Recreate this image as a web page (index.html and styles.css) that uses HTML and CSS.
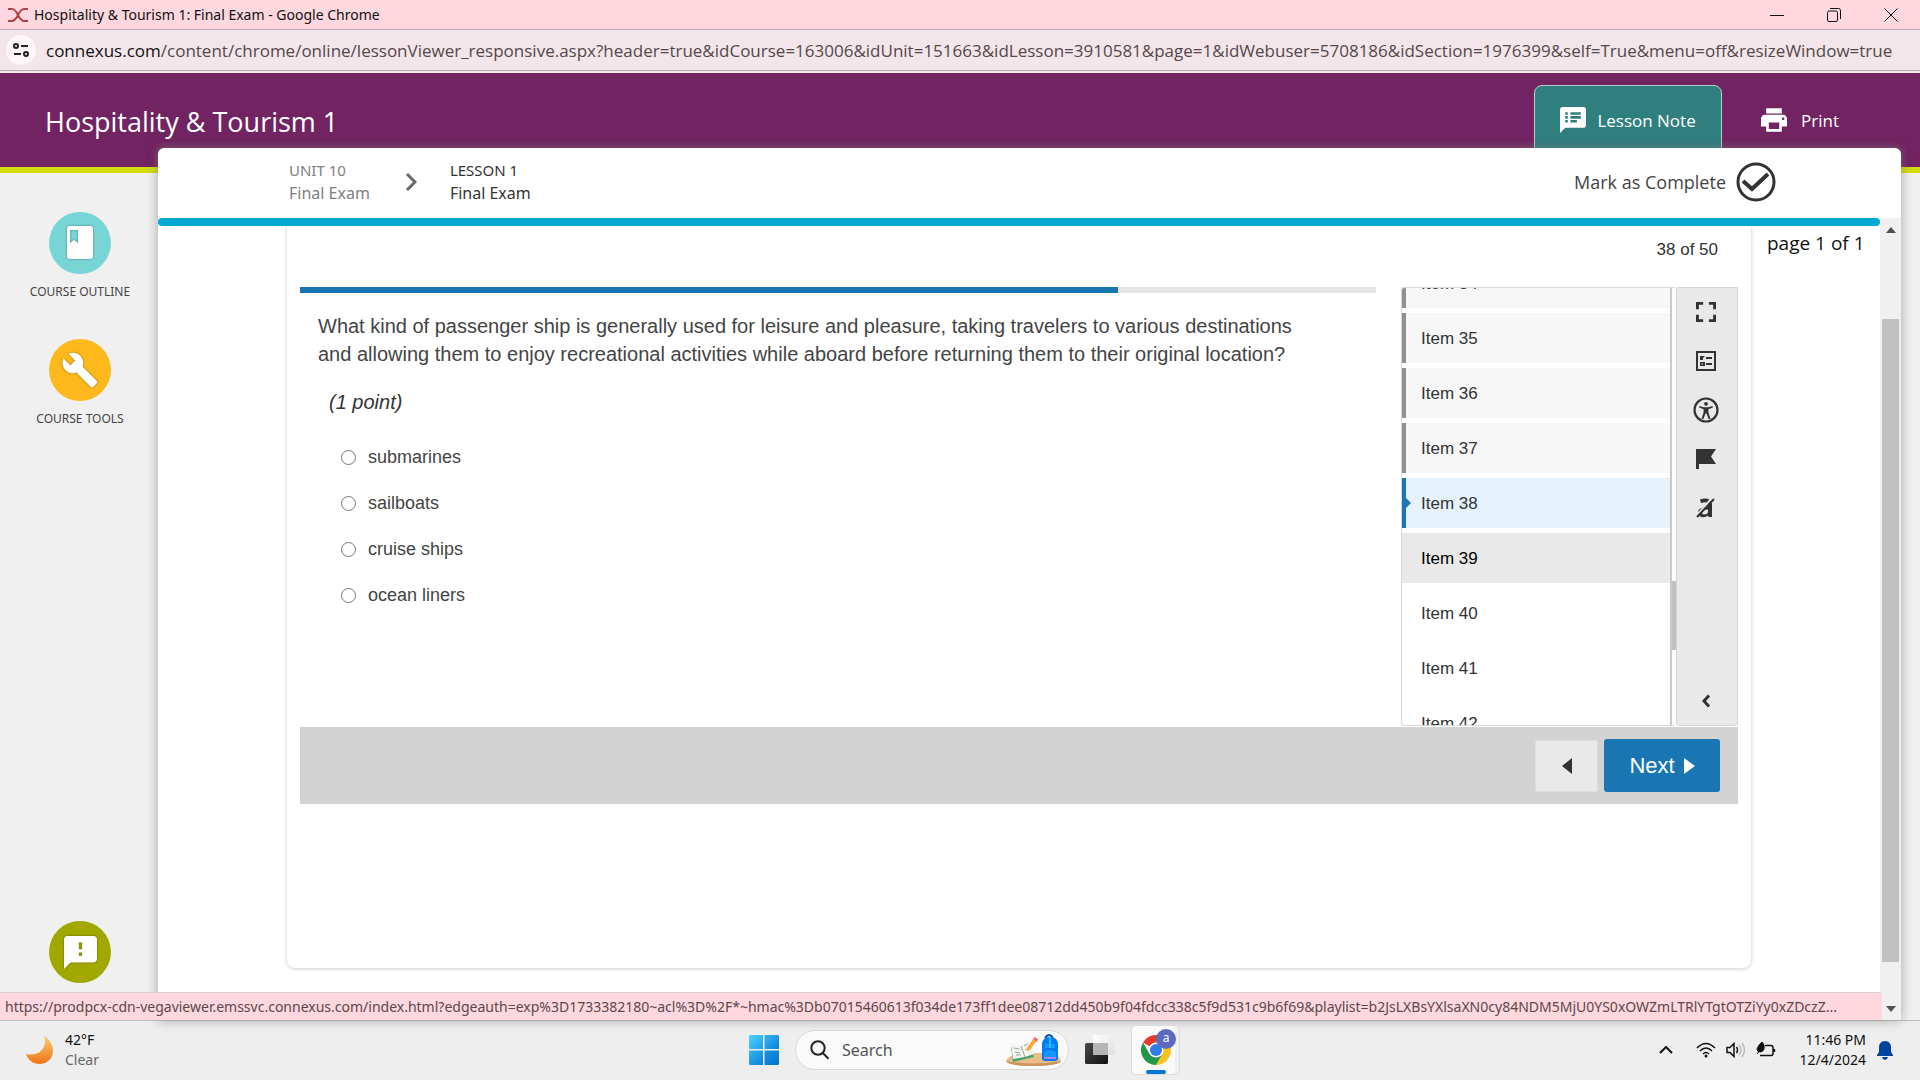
FILE: index.html
```html
<!DOCTYPE html>
<html lang="en">
<head>
<meta charset="utf-8">
<title>Hospitality &amp; Tourism 1: Final Exam</title>
<link rel="stylesheet" href="styles.css">
</head>
<body>
<div class="titlebar">
  <svg class="brand" viewBox="0 0 20 14" aria-hidden="true"><path d="M0 1h4q3 0 6 6t6 6h4M0 13h4q3 0 6-6t6-6h4" fill="none" stroke="#b0444c" stroke-width="2"/></svg>
  <span class="window-title">Hospitality &amp; Tourism 1: Final Exam - Google Chrome</span>
  <div class="window-buttons">
    <button aria-label="Minimize"><svg viewBox="0 0 14 14"><path d="M0 7.500h14"/></svg></button>
    <button aria-label="Restore"><svg viewBox="0 0 14 14"><rect x=".5" y="3" width="10" height="10.500" rx="1.500"/><path d="M3 .5h8.500q2 0 2 2V11"/></svg></button>
    <button aria-label="Close"><svg viewBox="0 0 14 14"><path d="M.5.5l13 13M13.500.5l-13 13"/></svg></button>
  </div>
</div>
<div class="addressbar">
  <button class="site-info" aria-label="Site information"><svg viewBox="0 0 16 14"><circle cx="3" cy="3" r="2"/><path d="M8 3h7M1 11h7"/><circle cx="13" cy="11" r="2"/></svg></button>
  <span class="url"><span class="host">connexus.com</span>/content/chrome/online/lessonViewer_responsive.aspx?header=true&amp;idCourse=163006&amp;idUnit=151663&amp;idLesson=3910581&amp;page=1&amp;idWebuser=5708186&amp;idSection=1976399&amp;self=True&amp;menu=off&amp;resizeWindow=true</span>
</div>
<div class="app">
  <header class="course-header">
    <h1>Hospitality &amp; Tourism 1</h1>
    <button class="lesson-note"><svg viewBox="2 2 20 20"><path d="M20 2H4c-1.100 0-1.990.9-1.990 2L2 22l4-4h14c1.100 0 2-.9 2-2V4c0-1.100-.9-2-2-2zM8 14H6v-2h2v2zm0-3H6V9h2v2zm0-3H6V6h2v2zm7 6h-5v-2h5v2zm3-3h-8V9h8v2zm0-3h-8V6h8v2z"/></svg>Lesson Note</button>
    <button class="print"><svg viewBox="2 2 20 20"><path d="M19 8H5c-1.660 0-3 1.340-3 3v6h4v4h12v-4h4v-6c0-1.660-1.340-3-3-3zm-3 11H8v-5h8v5zm3-7c-.55 0-1-.45-1-1s.45-1 1-1 1 .45 1 1-.45 1-1 1zm-1-9H6v4h12V3z"/></svg>Print</button>
  </header>
  <div class="workspace">
    <nav class="sidebar">
      <a class="side-link" href="#outline"><span class="disc teal"><svg viewBox="0 0 28 34"><path fill-rule="evenodd" d="M4 0h20q3 0 3 3v27q0 3-3 3H4q-3 0-3-3V3q0-3 3-3zM4 4v13l4-3 4 3V4z"/></svg></span>COURSE OUTLINE</a>
      <a class="side-link" href="#tools"><span class="disc amber"><svg class="wrench" viewBox="0 0 24 24"><path d="M22.700 19l-9.100-9.100c.9-2.300.4-5-1.500-6.900-2-2-5-2.400-7.400-1.300L9 6 6 9 1.600 4.700C.4 7.100.9 10.100 2.900 12.100c1.900 1.900 4.600 2.400 6.900 1.500l9.100 9.100c.4.4 1 .4 1.400 0l2.300-2.300c.5-.4.5-1.100.1-1.400z"/></svg></span>COURSE TOOLS</a>
      <a class="side-link feedback" href="#feedback" aria-label="Feedback"><span class="disc olive"><svg class="bubble" viewBox="2 2 20 20"><path d="M20 2H4c-1.100 0-1.990.9-1.990 2L2 22l4-4h14c1.100 0 2-.9 2-2V4c0-1.100-.9-2-2-2zm-7 12h-2v-2h2v2zm0-4h-2V6h2v4z"/></svg></span></a>
    </nav>
    <main class="lesson">
      <div class="lesson-bar">
        <div class="crumb unit"><small>UNIT 10</small><span>Final Exam</span></div>
        <svg class="crumb-arrow" viewBox="0 0 12 20" aria-hidden="true"><path d="M2 2l8 8-8 8"/></svg>
        <div class="crumb"><small>LESSON 1</small><span>Final Exam</span></div>
        <button class="complete">Mark as Complete<svg viewBox="0 0 40 40"><circle cx="20" cy="20" r="18"/><path class="tick" d="M7 19l9 8 16-15"/></svg></button>
      </div>
      <div class="lesson-body">
        <div class="scroll-area">
          <div class="accent"></div>
          <div class="page-row">
            <section class="exam">
              <p class="count">38 of 50</p>
              <div class="exam-row">
                <div class="question">
                  <div class="progress"><div class="progress-fill" style="width:76%"></div></div>
                  <p class="prompt">What kind of passenger ship is generally used for leisure and pleasure, taking travelers to various destinations<br>and allowing them to enjoy recreational activities while aboard before returning them to their original location?</p>
                  <p class="points">(1 point)</p>
                  <div class="answers">
                    <label><input type="radio" name="answer">submarines</label>
                    <label><input type="radio" name="answer">sailboats</label>
                    <label><input type="radio" name="answer">cruise ships</label>
                    <label><input type="radio" name="answer">ocean liners</label>
                  </div>
                </div>
                <div class="items">
                  <div class="item-list">
                    <button class="item done">Item 34</button>
                    <button class="item done">Item 35</button>
                    <button class="item done">Item 36</button>
                    <button class="item done">Item 37</button>
                    <button class="item current">Item 38</button>
                    <button class="item hover">Item 39</button>
                    <button class="item">Item 40</button>
                    <button class="item">Item 41</button>
                    <button class="item">Item 42</button>
                  </div>
                  <div class="item-track"><div class="item-thumb"></div></div>
                </div>
                <div class="tools">
                  <button aria-label="Full screen"><svg viewBox="5 5 14 14"><path d="M7 14H5v5h5v-2H7v-3zm-2-4h2V7h3V5H5v5zm12 7h-3v2h5v-5h-2v3zM14 5v2h3v3h2V5h-5z"/></svg></button>
                  <button aria-label="Item review"><svg viewBox="0 0 20 20"><path fill-rule="evenodd" d="M0 0h20v20H0zM2 2v16h16V2zM4 5h5L7 7v2H4zM10 6h6v2h-6zM4 11h5v4H4zm1.500 1.500v1h1.500v-1zM10 12h6v2h-6z"/></svg></button>
                  <button aria-label="Accessibility"><svg class="large" viewBox="0 0 26 26"><circle cx="13" cy="13" r="11.500" fill="none" stroke="#333" stroke-width="2.200"/><circle cx="13" cy="6.800" r="1.900"/><path d="M6.500 9l4 1.200h5l4-1.200.4 1.500-4.500 1.700v3l2 6.500-1.700.5-2.200-5.700h-1l-2.200 5.700-1.700-.5 2-6.500v-3l-4.500-1.700z"/></svg></button>
                  <button aria-label="Flag item"><svg viewBox="0 0 20 20"><path d="M0 0h20l-5 7.500 5 7.500H3v5H0z"/></svg></button>
                  <button aria-label="Answer masking"><svg viewBox="0 0 20 20"><path fill-rule="evenodd" d="M4 1.500Q10-.5 14 2q2 1.500 2 4v13h-3.500l-.5-1.500Q9 20 5.500 19 2 18 2 14.500 2 9 12 9V6.500Q12 3 5 5zM12 11.500q-6 0-6 3 0 2 2 2 4 0 4-3z"/><path d="M0 18L16 0" stroke="#e9e9e9" stroke-width="2"/><path d="M1 19L18 1" stroke="#333" stroke-width="2"/></svg></button>
                  <button class="collapse" aria-label="Collapse panel"><svg class="small" viewBox="0 0 10 14"><path d="M8 1.500L3 7l5 5.500" fill="none" stroke="#333" stroke-width="3"/></svg></button>
                </div>
              </div>
              <footer class="exam-nav">
                <button class="prev" aria-label="Previous"><svg viewBox="0 0 10 16"><path d="M10 0v16L0 8z"/></svg></button>
                <button class="next">Next<svg viewBox="0 0 11 16"><path d="M0 0v16l11-8z"/></svg></button>
              </footer>
            </section>
            <p class="page-label">page 1 of 1</p>
          </div>
        </div>
        <div class="scrollbar">
          <svg viewBox="0 0 10 6"><path d="M0 6h10L5 0z"/></svg>
          <div class="thumb"></div>
          <svg viewBox="0 0 10 6"><path d="M0 0h10L5 6z"/></svg>
        </div>
      </div>
    </main>
  </div>
  <div class="status">https://prodpcx-cdn-vegaviewer.emssvc.connexus.com/index.html?edgeauth=exp%3D1733382180~acl%3D%2F*~hmac%3Db07015460613f034de173ff1dee08712dd450b9f04fdcc338c5f9d531c9b6f69&amp;playlist=b2JsLXBsYXlsaXN0cy84NDM5MjU0YS0xOWZmLTRlYTgtOTZiYy0xZDczZ...</div>
</div>
<div class="taskbar">
  <div class="weather">
    <svg viewBox="0 0 28 28"><defs><linearGradient id="moon" x2="0" y2="1"><stop offset="0" stop-color="#f9cf70"/><stop offset="1" stop-color="#ef7418"/></linearGradient></defs><path d="M18 0C31 7 30 27 14 28 7 28 2 24 0 18 13 21 22 12 18 0z" fill="url(#moon)"/></svg>
    <div class="two-line"><span>42°F</span><span class="muted">Clear</span></div>
  </div>
  <div class="task-center">
    <button aria-label="Start"><svg class="start" viewBox="0 0 30 30"><defs><linearGradient id="win" x2="1" y2="1"><stop offset="0" stop-color="#4fd3ff"/><stop offset=".6" stop-color="#168fdf"/><stop offset="1" stop-color="#0072ce"/></linearGradient></defs><path d="M0 1q0-1 1-1h13v14H0zM15.500 0H29q1 0 1 1v13H15.500zM0 15.500h14V30H1q-1 0-1-1zM15.500 15.500H30V29q0 1-1 1H15.500z" fill="url(#win)"/></svg></button>
    <label class="search">
      <svg viewBox="0 0 20 20" aria-hidden="true"><circle cx="8" cy="8" r="6.700"/><path d="M12.800 13l5.700 5.700"/></svg>
      <input type="text" placeholder="Search" aria-label="Search">
      <svg class="art" viewBox="0 0 56 32" aria-hidden="true"><path d="M12 19h32q10 3 11 8-3 5-28 5Q3 32 0 27q2-5 12-8z" fill="#e8bd89"/><path d="M0 27q26 5 55 0-3 5-28 5Q3 32 0 27z" fill="#c9955b"/><path d="M5 13l10 1 8-6 5 15-9 2-12 3z" fill="#44a36a"/><path d="M5 10l10 2 8-6 5 14-9 3-12 2z" fill="#f2f5ee"/><path d="M15 12l4 11M8 14l5 1M9 18l5 1M10 21l5 0M18 12l4-2M19 16l5-2" stroke="#9ca9a0" fill="none"/><path d="M21 14l7-10 3 2-7 10-3 1z" fill="#ffa62b"/><path d="M27 5l2-2 3 2-1 3z" fill="#f46b6b"/><path d="M39 4q4-6 8 0" fill="none" stroke="#064ea8" stroke-width="2"/><path d="M36 11q0-8 8-8t8 8v13q0 3-3 3H39q-3 0-3-3z" fill="#087af0"/><path d="M39 10h10v4H39zM38 18q6-4 12 0v7H38z" fill="#1497ff"/><path d="M38 23h12v2H38z" fill="#a884ff"/><path d="M43 3h2v11h-2z" fill="#14c3ff"/></svg>
    </label>
    <button aria-label="Task view"><svg class="task-view" viewBox="0 0 30 30"><defs><linearGradient id="dark" x2="1" y2="1"><stop offset="0" stop-color="#4a4a4a"/><stop offset="1" stop-color="#111"/></linearGradient><linearGradient id="glass" x2="1" y2="1"><stop offset="0" stop-color="#fff"/><stop offset="1" stop-color="#dedede"/></linearGradient></defs><rect y="8" width="23" height="21" rx="1.500" fill="url(#dark)"/><rect x="8" width="22" height="20" rx="1.500" fill="url(#glass)"/><path d="M8 8h15v12H8z" fill="#b5b5b5"/></svg></button>
    <button class="chrome" aria-label="Google Chrome">
      <svg class="chrome-logo" viewBox="0 0 32 32"><path d="M16 16L3 8.500A15 15 0 0 1 29 8.500H16z" fill="#e33b2e"/><path d="M29 8.500A15 15 0 0 1 16 31l6.500-11.200L16 8.500z" fill="#fcc31c"/><path d="M3 8.500A15 15 0 0 0 16 31l6.500-11.200h-13z" fill="#24964a"/><circle cx="16" cy="16" r="7.500" fill="#fff"/><circle cx="16" cy="16" r="6" fill="#2f7bea"/></svg>
      <span class="badge">a</span><span class="running"></span>
    </button>
  </div>
  <div class="tray">
    <button aria-label="Show hidden icons"><svg class="caret" viewBox="0 0 14 8"><path d="M1 7l6-6 6 6"/></svg></button>
    <div class="tray-icons">
      <svg viewBox="0 0 20 16"><path d="M1 6q9-9 18 0M4 9q6-6 12 0M7 12q3-3 6 0"/><circle cx="10" cy="14" r="1.500" fill="#111" stroke="none"/></svg>
      <svg viewBox="0 0 20 16"><path d="M1 5.500h3l4-4v13l-4-4H1zM10.500 5q2 3 0 6"/><path d="M13 3q4 5 0 10M16 1q5 7 0 14" stroke="#bbb"/></svg>
      <svg viewBox="0 0 20 16"><path d="M9 3.500h6q2 0 2 2v6q0 2-2 2H4M18.500 7v3"/><path d="M6 0q3 3 2 7-1 3-4 3-3 0-3-3 1-4 5-7zM4 8l-3 4" fill="#111" stroke-width="1"/></svg>
    </div>
    <div class="two-line clock"><span>11:46 PM</span><span>12/4/2024</span></div>
    <svg class="bell" viewBox="0 0 16 19"><path d="M8 0c4 0 6 3 6 6v5l2 3v1H0v-1l2-3V6c0-3 2-6 6-6zM5 16h6q-1 3-3 3t-3-3z"/></svg>
  </div>
</div>
</body>
</html>
```
FILE: styles.css
```css
* { box-sizing: border-box; }
body { margin: 0; height: 100vh; min-height: 800px; display: flex; flex-direction: column; overflow: hidden; font-family: "Noto Sans", "Open Sans", sans-serif; font-size: 14px; color: #333; background: #f0f0f0; }
p, h1 { margin: 0; font-weight: 400; }
button { padding: 0; border: 0; background: none; font: inherit; color: inherit; cursor: pointer; display: flex; align-items: center; justify-content: center; }
svg { display: block; flex: none; }

.titlebar { height: 30px; flex: none; display: flex; align-items: center; padding-left: 8px; background: #ffd7de; border-bottom: 1px solid #b8aaae; color: #111; }
.brand { width: 20px; height: 14px; margin-right: 6px; }
.window-title { font-size: 14px; white-space: nowrap; }
.window-buttons { display: flex; margin-left: auto; padding-right: 1px; }
.window-buttons button { width: 57px; height: 29px; }
.window-buttons svg { width: 14px; height: 14px; fill: none; stroke: #111; }

.addressbar { height: 43px; flex: none; display: flex; align-items: center; gap: 10px; padding: 0 6px 1px; background: #f3e6ea; border-bottom: 2px solid #f3e6ea; box-shadow: inset 0 -1px #b8aaae; }
.site-info { width: 30px; height: 30px; border-radius: 50%; background: #fff6f7; }
.site-info svg { width: 16px; height: 14px; fill: none; stroke: #222; stroke-width: 2; }
.url { font-family: "Open Sans", sans-serif; font-size: 17px; color: #54484b; white-space: nowrap; }
.host { color: #111; }

.app { position: relative; flex: 1; min-height: 0; display: flex; flex-direction: column; border-bottom: 1px solid #bdbdbd; }
.course-header { height: 100px; flex: none; display: flex; align-items: flex-start; padding: 12px 81px 0 45px; background: #722462; border-bottom: 6px solid #d2de0f; color: #fff; font-family: "Open Sans", sans-serif; }
.course-header h1 { margin-right: auto; font-size: 27px; line-height: 74px; }
.lesson-note { width: 188px; height: 72px; gap: 11px; padding-bottom: 2px; border: 1px solid #b9cfd0; border-radius: 8px 8px 0 0; background: #307f7f; font-size: 17px; }
.lesson-note svg, .print svg { width: 26px; height: 26px; fill: #fff; }
.print { margin-left: 39px; height: 70px; gap: 14px; font-size: 17px; }

.workspace { flex: 1; min-height: 0; display: flex; padding-right: 19px; }
.sidebar { width: 158px; flex: none; display: flex; flex-direction: column; align-items: center; gap: 38px; padding: 39px 0 37px 2px; }
.side-link { display: flex; flex-direction: column; align-items: center; gap: 8px; color: #444; font-size: 12px; line-height: 19px; text-decoration: none; white-space: nowrap; }
.feedback { margin-top: auto; }
.disc { width: 62px; height: 62px; border-radius: 50%; display: flex; align-items: center; justify-content: center; }
.disc svg { width: 28px; height: 34px; fill: #fff; filter: drop-shadow(0 0 1px #0006); }
.disc .wrench { width: 38px; height: 38px; }
.disc .bubble { width: 33px; height: 33px; }
.teal { background: #78d5d5; }
.amber { background: #fdb81c; }
.olive { background: #a1a800; }

.lesson { position: relative; flex: 1; min-width: 0; margin-top: -25px; display: flex; flex-direction: column; background: #fff; border-radius: 6px 6px 0 0; box-shadow: 0 0 12px #0005, 0 0 8px #fff6; }
.lesson-bar { height: 70px; flex: none; display: flex; align-items: center; padding: 0 125px 2px 131px; }
.crumb { display: flex; flex-direction: column; font-size: 16px; line-height: 24px; color: #333; }
.crumb small { font-size: 15px; line-height: 22px; }
.unit { color: #808080; }
.crumb-arrow { width: 12px; height: 20px; margin: 0 33px 0 35px; fill: none; stroke: #666; stroke-width: 3; }
.complete { margin-left: auto; gap: 10px; font-family: "Open Sans", sans-serif; font-size: 18px; color: #444; }
.complete svg { width: 40px; height: 40px; fill: none; stroke: #333; stroke-width: 3; }
.tick { stroke-width: 4; }

.lesson-body { flex: 1; min-height: 0; display: flex; }
.scroll-area { flex: 1; min-width: 0; display: flex; flex-direction: column; }
.accent { height: 8px; flex: none; background: #00a9d6; border-radius: 4px; }
.page-row { display: grid; grid-template-columns: 129px 1fr 129px; flex: 1; padding-bottom: 52px; }
.exam { grid-column: 2; padding: 0 13px; border-radius: 0 0 8px 8px; box-shadow: 0 1px 4px #0003; clip-path: inset(0 -8px -8px -8px); font-family: "Liberation Sans", Arial, sans-serif; }
.page-label { padding-left: 16px; font-family: "Open Sans", sans-serif; font-size: 19px; line-height: 34px; color: #111; white-space: nowrap; }
.count { height: 61px; padding-right: 20px; font-size: 17px; line-height: 48px; text-align: right; }
.exam-row { height: 440px; display: flex; padding-bottom: 1px; }
.question { flex: 1; margin-right: 25px; }
.progress { height: 6px; background: #e6e6e6; }
.progress-fill { height: 6px; background: #1976b2; }
.prompt { margin: 19px 0 0 18px; font-size: 20px; line-height: 28px; color: #444; white-space: nowrap; }
.points { margin: 20px 0 0 29px; font-size: 20px; line-height: 28px; font-style: italic; }
.answers { margin: 18px 0 0 41px; display: flex; flex-direction: column; align-items: flex-start; }
.answers label { height: 46px; display: flex; align-items: center; gap: 12px; font-size: 18px; color: #444; }
.answers input { width: 15px; height: 15px; margin: 0; }

.items { width: 275px; height: 439px; flex: none; display: flex; overflow: hidden; border: 1px solid #d8d8d8; border-right: 0; border-radius: 3px; }
.item-list { flex: 1; display: flex; flex-direction: column; gap: 5px; margin-top: -30px; }
.item { position: relative; height: 50px; flex: none; justify-content: flex-start; padding: 2px 0 0 19px; font-size: 17px; }
.done { background: #f7f7f7; border-left: 4px solid #919191; padding-left: 15px; }
.current { background: #e5f2fc; border-left: 4px solid #1976b2; padding-left: 15px; }
.current::before { content: ""; position: absolute; left: 0; top: 20px; border: 5px solid transparent; border-left-color: #1976b2; border-right: 0; }
.hover { background: #e9e9e9; color: #000; }
.item-track { width: 6px; border-left: 2px solid #c9c9c9; padding-top: 293px; }
.item-thumb { height: 69px; background: #c1c1c1; }
.tools { width: 62px; flex: none; display: flex; flex-direction: column; align-items: center; background: #e9e9e9; border: 1px solid #d5d5d5; border-radius: 0 0 3px 3px; }
.tools button { width: 60px; height: 49px; padding: 0 3px 2px 0; }
.tools svg { width: 20px; height: 20px; fill: #333; }
.tools .large { width: 26px; height: 26px; }
.tools .small { width: 10px; height: 14px; }
.tools .collapse { margin-top: auto; padding-bottom: 0; }
.exam-nav { height: 77px; display: flex; align-items: center; justify-content: flex-end; gap: 6px; padding-right: 18px; background: #d3d3d3; }
.prev { width: 63px; height: 52px; background: #e9e9e9; border: 1px solid #dedede; border-radius: 2px; }
.prev svg { width: 10px; height: 16px; fill: #333; }
.next { width: 116px; height: 53px; gap: 9px; background: #1976b2; border-radius: 3px; color: #fff; font-size: 22px; }
.next svg { width: 11px; height: 16px; fill: #fff; }
.scrollbar { width: 21px; display: flex; flex-direction: column; align-items: center; padding: 9px 0 8px; background: #f0f0f0; }
.scrollbar svg { width: 10px; height: 6px; fill: #505050; }
.thumb { flex: 1; width: 17px; margin: 86px 0 44px; background: #c1c1c1; }

.status { position: absolute; left: 0; bottom: 0; right: 38px; height: 28px; padding-left: 5px; overflow: hidden; background: #ffd7de; border-top: 1px solid #d8d0d2; border-radius: 0 4px 0 0; font-size: 14px; line-height: 27px; color: #5c484c; white-space: nowrap; }

.taskbar { height: 59px; flex: none; display: grid; grid-template-columns: 1fr auto 1fr; align-items: center; padding: 0 27px 1px 26px; background: #eee; }
.weather { display: flex; align-items: center; gap: 11px; }
.weather svg { width: 28px; height: 28px; }
.two-line { display: flex; flex-direction: column; font-size: 14px; line-height: 20px; color: #111; }
.muted { color: #666; }
.task-center { display: flex; align-items: center; gap: 16px; padding-left: 10px; }
.start { width: 30px; height: 30px; }
.search { width: 274px; height: 40px; display: flex; align-items: center; gap: 12px; padding: 0 6px 0 14px; background: #fafafa; border: 1px solid #d9d9d9; border-radius: 20px; }
.search svg { width: 20px; height: 20px; fill: none; stroke: #222; stroke-width: 2; }
.search input { flex: 1; min-width: 0; padding: 0; border: 0; background: none; font: inherit; font-size: 16px; }
.search input::placeholder { color: #555; opacity: 1; }
.search .art { width: 56px; height: 32px; stroke-width: 1; stroke: none; }
.task-view { width: 30px; height: 30px; }
.chrome { position: relative; width: 49px; height: 50px; background: #fafafa; border: 1px solid #ddd; border-radius: 5px; box-shadow: inset -4px 0 #f0f0f0; }
.chrome-logo { width: 32px; height: 32px; }
.badge { position: absolute; right: 3px; top: 3px; width: 20px; height: 20px; border-radius: 50%; background: #5c6bc0; color: #fff; font-size: 12px; line-height: 18px; text-align: center; }
.running { position: absolute; left: 14px; bottom: 0; width: 20px; height: 4px; border-radius: 2px; background: #0078d4; }
.tray { display: flex; align-items: center; justify-content: flex-end; gap: 11px; }
.caret { width: 14px; height: 8px; fill: none; stroke: #111; stroke-width: 2; margin-right: 12px; }
.tray-icons { display: flex; gap: 10px; margin-right: 13px; }
.tray-icons svg { width: 20px; height: 16px; fill: none; stroke: #111; stroke-width: 1.500; }
.clock { text-align: right; }
.bell { width: 16px; height: 19px; fill: #00449c; }
```
